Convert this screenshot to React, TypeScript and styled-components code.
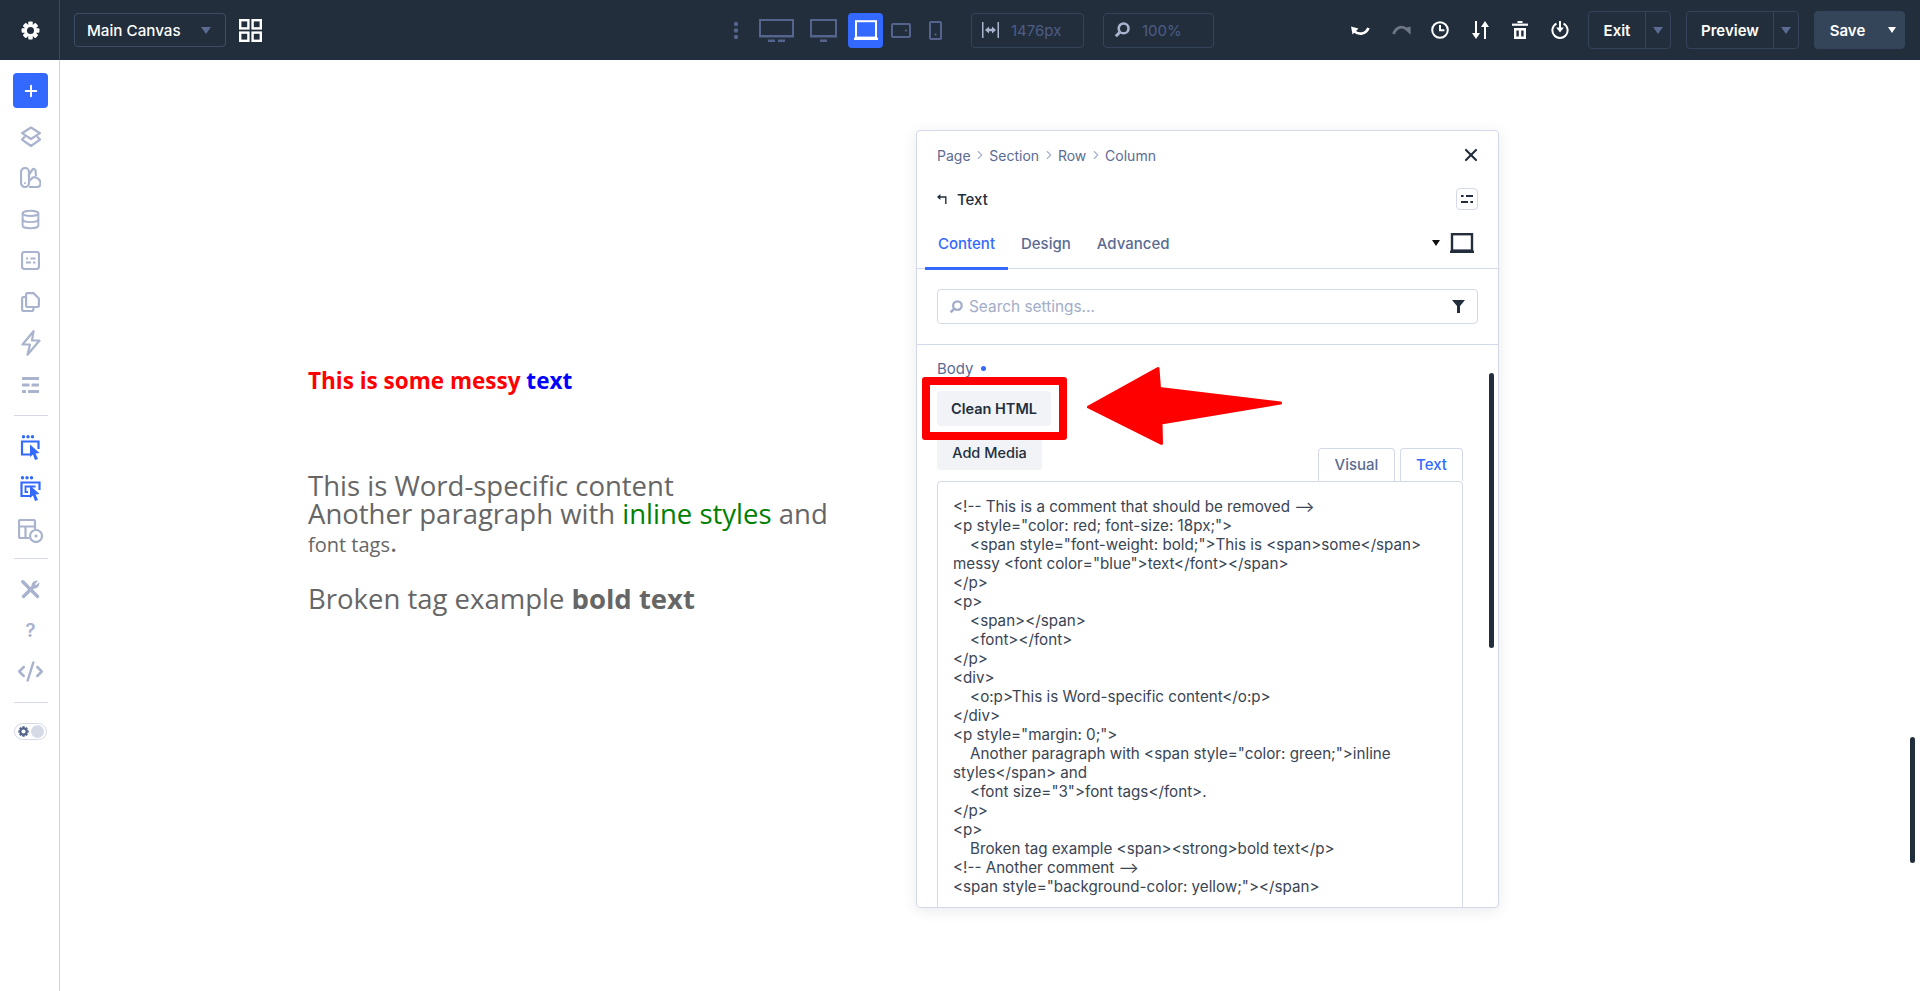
import React from "react";
import styled, { createGlobalStyle } from "styled-components";
import { Database, Plus, X, ChevronRight, Code2 } from "lucide-react";

const GlobalStyle = createGlobalStyle`
  html, body {
    margin: 0;
    padding: 0;
    height: 100%;
    overflow: hidden;
    background: #ffffff;
    font-family: Inter, "Liberation Sans", sans-serif;
  }
  * {
    box-sizing: border-box;
  }
`;

const Shell = styled.div`
  width: 100%;
  height: 100vh;
  display: flex;
  flex-direction: column;
  overflow: hidden;
`;

/* ---------- top bar ---------- */
const TopBar = styled.header`
  height: 60px;
  flex: none;
  display: flex;
  align-items: center;
  background-color: #232e3c;
`;
const GearCell = styled.div`
  width: 60px;
  height: 100%;
  flex: none;
  padding-left: 2px;
  display: flex;
  align-items: center;
  justify-content: center;
  border-right: 1px solid #3a4a63;
`;
const CanvasSelect = styled.div`
  width: 152px;
  height: 34px;
  margin-left: 14px;
  padding: 0 14px 0 12px;
  display: flex;
  align-items: center;
  justify-content: space-between;
  border: 1px solid #3d4d68;
  border-radius: 4px;
  color: #ffffff;
  font-size: 15.2px;
  font-weight: 500;
`;
const Caret = styled.span<{ $color?: string; $small?: boolean }>`
  width: 0;
  height: 0;
  flex: none;
  border-left: ${(p) => (p.$small ? 4 : 5)}px solid transparent;
  border-right: ${(p) => (p.$small ? 4 : 5)}px solid transparent;
  border-top: ${(p) => (p.$small ? 6 : 7)}px solid ${(p) => p.$color || "#5a6a90"};
`;
const GridButton = styled.div`
  margin-left: 13px;
  display: flex;
`;
const DeviceGroup = styled.div`
  margin-left: 471px;
  display: flex;
  align-items: center;
`;
const DeviceSlot = styled.div<{ $w: number; $gap: number; $active?: boolean }>`
  width: ${(p) => p.$w}px;
  height: 35px;
  margin-right: ${(p) => p.$gap}px;
  display: flex;
  align-items: center;
  justify-content: center;
  border-radius: 4px;
  background-color: ${(p) => (p.$active ? "#3369ff" : "transparent")};
`;
const MeterBox = styled.div<{ $w: number; $gap: number }>`
  width: ${(p) => p.$w}px;
  height: 35px;
  margin-left: ${(p) => p.$gap}px;
  padding-left: 10px;
  display: flex;
  align-items: center;
  gap: 12px;
  border: 1px solid #35435a;
  border-radius: 4px;
  color: #4d5d86;
  font-size: 15px;
`;
const HistoryGroup = styled.div`
  margin-left: 137px;
  display: flex;
  align-items: center;
`;
const HistoryItem = styled.span<{ $gap?: number }>`
  display: flex;
  margin-left: ${(p) => p.$gap || 0}px;
`;
const BarButton = styled.div<{ $w: number; $gap: number; $solid?: boolean }>`
  width: ${(p) => p.$w}px;
  height: 38px;
  margin-left: ${(p) => p.$gap}px;
  flex: none;
  display: flex;
  align-items: center;
  border: 1px solid ${(p) => (p.$solid ? "#34455a" : "#35435a")};
  border-radius: 4px;
  background-color: ${(p) => (p.$solid ? "#34455a" : "transparent")};
  color: #ffffff;
  font-size: 15px;
  font-weight: 600;
`;
const BarLabel = styled.span`
  flex: 1;
  text-align: center;
`;
const BarSplit = styled.span<{ $w: number; $line?: boolean }>`
  width: ${(p) => p.$w}px;
  height: 100%;
  flex: none;
  display: flex;
  align-items: center;
  justify-content: center;
  border-left: ${(p) => (p.$line ? "1px solid #35435a" : "none")};
`;

/* ---------- left rail ---------- */
const Workspace = styled.div`
  flex: 1;
  min-height: 0;
  display: flex;
`;
const SideRail = styled.aside`
  width: 60px;
  flex: none;
  padding: 13px 0 0 2px;
  display: flex;
  flex-direction: column;
  align-items: center;
  border-right: 1px solid #ccd3e2;
`;
const AddButton = styled.div`
  width: 35px;
  height: 35px;
  flex: none;
  display: flex;
  align-items: center;
  justify-content: center;
  border-radius: 4px;
  background-color: #3369ff;
  color: #ffffff;
`;
const RailGroup = styled.div<{ $top: number }>`
  margin-top: ${(p) => p.$top}px;
  width: 100%;
  display: flex;
  flex-direction: column;
`;
const RailItem = styled.div<{ $h?: number }>`
  height: ${(p) => p.$h || 41.3}px;
  display: flex;
  align-items: center;
  justify-content: center;
  color: #a9b3cd;
`;
const RailRule = styled.div<{ $top: number }>`
  width: 34px;
  height: 1px;
  flex: none;
  margin-top: ${(p) => p.$top}px;
  background-color: #d5dae6;
`;
const QuestionMark = styled.span`
  color: #a9b3cd;
  font-size: 19px;
  font-weight: 600;
`;
const ThemeToggle = styled.div`
  width: 33px;
  height: 17px;
  margin-top: 20px;
  padding: 0 2px 0 3px;
  display: flex;
  align-items: center;
  justify-content: space-between;
  border: 1px solid #d5dae6;
  border-radius: 9px;
`;
const ToggleKnob = styled.span`
  width: 13px;
  height: 13px;
  border-radius: 50%;
  background-color: #d5dae6;
`;

/* ---------- canvas ---------- */
const Canvas = styled.main`
  flex: 1;
  position: relative;
  min-width: 0;
  padding: 307px 0 0 248px;
  font-family: "Open Sans", sans-serif;
  color: #666666;
`;
const MessyLine = styled.p`
  margin: 0;
  color: #ff0000;
  font-size: 22.5px;
  font-weight: 700;
  line-height: 28px;
`;
const BlueText = styled.span`
  color: #0000ff;
`;
const BodyCopy = styled.div`
  margin-top: 77px;
  font-size: 27.5px;
  line-height: 28px;
`;
const GreenText = styled.span`
  color: #008000;
`;
const SmallText = styled.span`
  font-size: 20px;
`;
const BrokenLine = styled.p`
  margin: 20px 0 0;
  font-size: 27.5px;
  line-height: 40px;
`;
const PageScrollThumb = styled.div`
  position: absolute;
  right: 5px;
  top: 677px;
  width: 5px;
  height: 126px;
  border-radius: 3px;
  background-color: #232e3c;
`;

/* ---------- settings window ---------- */
const SettingsWindow = styled.section`
  position: absolute;
  left: 856px;
  top: 70px;
  width: 583px;
  height: 778px;
  overflow: hidden;
  background-color: #ffffff;
  border: 1px solid #d3d9e8;
  border-radius: 4px;
  box-shadow: 0 3px 14px rgba(45, 60, 90, 0.1);
  font-family: Inter, "Liberation Sans", sans-serif;
`;
const CrumbRow = styled.div`
  height: 48px;
  padding: 0 20px;
  display: flex;
  align-items: center;
  color: #5b6b93;
  font-size: 14px;
`;
const CrumbSep = styled.span`
  display: flex;
  margin: 0 2.4px;
  color: #a9b3cd;
`;
const CloseSlot = styled.span`
  margin: 0 -3px 0 auto;
  display: flex;
  color: #232e3c;
`;
const TitleRow = styled.div`
  height: 40px;
  padding: 0 20px;
  display: flex;
  align-items: center;
  gap: 10px;
  color: #232e3c;
  font-size: 15px;
  font-weight: 500;
`;
const PresetButton = styled.span`
  width: 22px;
  height: 22px;
  margin-left: auto;
  display: flex;
  align-items: center;
  justify-content: center;
  border: 1px solid #d3d9e8;
  border-radius: 4px;
`;
const TabRow = styled.div`
  height: 50px;
  padding: 0 24px 0 8px;
  display: flex;
  align-items: flex-start;
  border-bottom: 1px solid #d3d9e8;
`;
const TabItem = styled.div<{ $active?: boolean }>`
  height: 51px;
  padding: 1px 13px 0;
  display: flex;
  align-items: center;
  border-bottom: 3px solid ${(p) => (p.$active ? "#3369ff" : "transparent")};
  color: ${(p) => (p.$active ? "#3369ff" : "#5b6b93")};
  font-size: 15px;
  font-weight: 500;
`;
const ScreenPicker = styled.div`
  margin-left: auto;
  height: 48px;
  display: flex;
  align-items: center;
  gap: 10px;
`;
const SearchZone = styled.div`
  height: 76px;
  padding: 20px;
  border-bottom: 1px solid #d3d9e8;
`;
const SearchBox = styled.div`
  height: 35px;
  padding: 0 12px 0 11px;
  display: flex;
  align-items: center;
  gap: 6px;
  border: 1px solid #d3d9e8;
  border-radius: 4px;
  color: #a3adc9;
  font-size: 15.4px;
`;
const FilterSlot = styled.span`
  margin-left: auto;
  display: flex;
`;
const FieldZone = styled.div`
  position: relative;
  padding: 15px 35px 0 20px;
`;
const FieldLabel = styled.div`
  height: 17px;
  display: flex;
  align-items: center;
  gap: 7px;
  color: #5b6b93;
  font-size: 15px;
`;
const ChangedDot = styled.span`
  width: 5px;
  height: 5px;
  border-radius: 50%;
  background-color: #3369ff;
`;
const MediaButton = styled.div<{ $w: number; $top: number; $strong?: boolean }>`
  width: ${(p) => p.$w}px;
  height: 35px;
  margin-top: ${(p) => p.$top}px;
  display: flex;
  align-items: center;
  justify-content: center;
  border-radius: 4px;
  background-color: #f1f3f7;
  color: #232e3c;
  font-size: 14.5px;
  font-weight: ${(p) => (p.$strong ? 600 : 500)};
`;
const EditorTabs = styled.div`
  margin-top: -22px;
  height: 33px;
  display: flex;
  justify-content: flex-end;
  gap: 5px;
`;
const EditorTab = styled.div<{ $w: number; $active?: boolean }>`
  width: ${(p) => p.$w}px;
  height: 33px;
  padding-bottom: 2px;
  display: flex;
  align-items: center;
  justify-content: center;
  border: 1px solid #d3d9e8;
  border-bottom: none;
  border-radius: 4px 4px 0 0;
  color: ${(p) => (p.$active ? "#3369ff" : "#5b6b93")};
  font-size: 15px;
  font-weight: 500;
`;
const CodeArea = styled.div`
  height: 460px;
  padding: 15px 15px 0 15px;
  border: 1px solid #d3d9e8;
  border-radius: 4px 4px 0 0;
  color: #3a4554;
  font-size: 15.2px;
  line-height: 19px;
  white-space: pre-wrap;
`;
const PanelScrollThumb = styled.div`
  position: absolute;
  right: 4px;
  top: 28px;
  width: 5px;
  height: 275px;
  border-radius: 3px;
  background-color: #232e3c;
`;
const Highlight = styled.div`
  position: absolute;
  left: 5px;
  top: 32px;
  width: 145px;
  height: 63px;
  border: 8px solid #ff0000;
  border-radius: 3px;
`;

const CODE_TEXT = `<!-- This is a comment that should be removed -->
<p style="color: red; font-size: 18px;">
    <span style="font-weight: bold;">This is <span>some</span> messy <font color="blue">text</font></span>
</p>
<p>
    <span></span>
    <font></font>
</p>
<div>
    <o:p>This is Word-specific content</o:p>
</div>
<p style="margin: 0;">
    Another paragraph with <span style="color: green;">inline styles</span> and
    <font size="3">font tags</font>.
</p>
<p>
    Broken tag example <span><strong>bold text</p>
<!-- Another comment -->
<span style="background-color: yellow;"></span>`;

const GearIcon = ({ size, color, hole }: { size: number; color: string; hole: string }) => (
  <svg width={size} height={size} viewBox="0 0 20 20">
    <g fill={color}>
      {[0, 45, 90, 135].map((a) => (
        <rect key={a} x="7.6" y="0.6" width="4.8" height="18.8" rx="1" transform={`rotate(${a} 10 10)`} />
      ))}
    </g>
    <circle cx="10" cy="10" r="6.4" fill={color} />
    <circle cx="10" cy="10" r="3.7" fill={hole} />
  </svg>
);

const GridIcon = () => (
  <svg width="23" height="23" viewBox="0 0 23 23" fill="none" stroke="#ffffff" strokeWidth="2.4">
    <rect x="1.2" y="1.2" width="8.2" height="8.2" />
    <rect x="13.6" y="1.2" width="8.2" height="8.2" />
    <rect x="1.2" y="13.6" width="8.2" height="8.2" />
    <rect x="13.6" y="13.6" width="8.2" height="8.2" />
  </svg>
);

const DEVICE = "#55648c";

const KebabIcon = () => (
  <svg width="6" height="19" viewBox="0 0 6 19" fill={DEVICE}>
    <circle cx="3" cy="3" r="2.2" />
    <circle cx="3" cy="9.5" r="2.2" />
    <circle cx="3" cy="16" r="2.2" />
  </svg>
);
const WideMonitorIcon = () => (
  <svg width="35" height="23" viewBox="0 0 35 23" fill="none">
    <rect x="1" y="1" width="33" height="16" stroke={DEVICE} strokeWidth="2" />
    <rect x="0" y="16" width="35" height="2.5" fill={DEVICE} />
    <rect x="9" y="20.5" width="7" height="2.5" fill={DEVICE} />
    <rect x="19" y="20.5" width="7" height="2.5" fill={DEVICE} />
  </svg>
);
const MonitorIcon = () => (
  <svg width="27" height="23" viewBox="0 0 27 23" fill="none">
    <rect x="1" y="1" width="25" height="16" stroke={DEVICE} strokeWidth="2" />
    <rect x="0" y="16" width="27" height="2.5" fill={DEVICE} />
    <rect x="10" y="20.5" width="7" height="2.5" fill={DEVICE} />
  </svg>
);
const LaptopIcon = ({ color, stroke }: { color: string; stroke: number }) => (
  <svg width="24" height="20" viewBox="0 0 24 20" fill="none">
    <rect x="2" y="1.2" width="20" height="16.4" stroke={color} strokeWidth={stroke} />
    <rect x="0" y="17.6" width="24" height="2.4" fill={color} />
  </svg>
);
const TabletIcon = () => (
  <svg width="20" height="15" viewBox="0 0 20 15" fill="none">
    <rect x="1" y="1" width="18" height="13" rx="1" stroke={DEVICE} strokeWidth="2" />
    <circle cx="15" cy="7.5" r="1.1" fill={DEVICE} />
  </svg>
);
const PhoneIcon = () => (
  <svg width="13" height="19" viewBox="0 0 13 19" fill="none">
    <rect x="1" y="1" width="11" height="17" rx="1" stroke={DEVICE} strokeWidth="2" />
    <circle cx="6.5" cy="13.5" r="1.1" fill={DEVICE} />
  </svg>
);
const ResizeIcon = () => (
  <svg width="17" height="16" viewBox="0 0 17 16" fill="#a9b3cd">
    <rect x="0" y="0" width="1.5" height="16" />
    <rect x="15.5" y="0" width="1.5" height="16" />
    <path d="M3 8l4-3.5v2.3h3V4.5L14 8l-4 3.5V9.2H7v2.3z" />
  </svg>
);
const LensIcon = ({ size, color }: { size: number; color: string }) => (
  <svg width={size} height={size} viewBox="0 0 16 16" fill="none" stroke={color}>
    <circle cx="9.6" cy="6.4" r="4.9" strokeWidth="2.6" />
    <path d="M5.8 10.2L1.8 14.2" strokeWidth="3" />
  </svg>
);

const UndoIcon = () => (
  <svg width="19" height="11" viewBox="0 0 19 11" fill="none">
    <path d="M0 1.5L7.5 3.5L1.5 9.5Z" fill="#ffffff" />
    <path d="M3.5 6.5C8 10 14.5 9.5 17.5 3" stroke="#ffffff" strokeWidth="2.8" />
  </svg>
);
const RedoIcon = () => (
  <svg width="19" height="11" viewBox="0 0 19 11" fill="none">
    <path d="M11.5 3.2L18.6 1.6L18.6 9.8Z" fill="#6d7683" />
    <path d="M15 4.5C10.5 0.5 4.5 1.5 1.5 9" stroke="#6d7683" strokeWidth="2.8" />
  </svg>
);
const ClockIcon = () => (
  <svg width="18" height="18" viewBox="0 0 18 18" fill="none" stroke="#ffffff" strokeWidth="2">
    <circle cx="9" cy="9" r="7.8" />
    <path d="M9 4v5.2h4.4" />
  </svg>
);
const SortIcon = () => (
  <svg width="17" height="18" viewBox="0 0 17 18" fill="#ffffff">
    <rect x="3" y="0" width="2" height="13" />
    <path d="M0 12h8l-4 6z" />
    <rect x="12" y="5" width="2" height="13" />
    <path d="M9 6h8l-4-6z" />
  </svg>
);
const TrashIcon = () => (
  <svg width="16" height="18" viewBox="0 0 16 18" fill="none">
    <rect x="5.5" y="0" width="5" height="2" fill="#ffffff" />
    <rect x="0" y="2.6" width="16" height="2.2" fill="#ffffff" />
    <path d="M2 7h12v11H2z M4.4 9.4v6.2h2.4V9.4z M9.2 9.4v6.2h2.4V9.4z" fill="#ffffff" fillRule="evenodd" />
  </svg>
);
const PowerIcon = () => (
  <svg width="18" height="18" viewBox="0 0 18 18" fill="none" stroke="#ffffff" strokeWidth="2">
    <path d="M5.5 2.6A7.6 7.6 0 1 0 12.5 2.6" />
    <path d="M9 0v7" strokeWidth="2" />
    <path d="M5.2 6.6h7.6L9 11.6z" fill="#ffffff" stroke="none" />
  </svg>
);

const LayersIcon = () => (
  <svg width="22" height="22" viewBox="0 0 22 22" fill="none" stroke="currentColor" strokeWidth="2.2" strokeLinejoin="round">
    <path d="M11 1.5L20 7.2L11 13L2 7.2Z" />
    <path d="M5 10.5L2 13.6L11 20L20 13.6L17 10.5" />
  </svg>
);
const PaletteIcon = () => (
  <svg width="21" height="21" viewBox="0 0 21 21" fill="none" stroke="currentColor" strokeWidth="2.2">
    <rect x="1" y="1" width="8" height="19" rx="4" />
    <path d="M9 7.5L12.5 2.5C13.5 1.5 15 1.8 15.5 3.2L16 9" />
    <path d="M9 20h8c4 0 4.5-5 2-7.5c-2-2-4-3-6-2L9 14" />
    <circle cx="5" cy="16" r="1" fill="currentColor" stroke="none" />
  </svg>
);
const FormIcon = () => (
  <svg width="19" height="19" viewBox="0 0 19 19" fill="none" stroke="currentColor" strokeWidth="2.2">
    <rect x="1" y="1" width="17" height="17" rx="2.5" />
    <path d="M5 7.5h2M9.5 7.5h5M5 11.5h5M12 11.5h2.5" />
  </svg>
);
const PagesIcon = () => (
  <svg width="19" height="20" viewBox="0 0 19 20" fill="none" stroke="currentColor" strokeWidth="2.2" strokeLinejoin="round">
    <path d="M5.5 5H2.5A1.4 1.4 0 0 0 1.1 6.4V17.6A1.4 1.4 0 0 0 2.5 19H11A1.4 1.4 0 0 0 12.4 17.6V15" />
    <path d="M6.5 1.1H12.5L17.9 6.5V13.6A1.4 1.4 0 0 1 16.5 15H6.5A1.4 1.4 0 0 1 5.1 13.6V2.5A1.4 1.4 0 0 1 6.5 1.1Z" />
  </svg>
);
const BoltIcon = () => (
  <svg width="20" height="26" viewBox="0 0 20 26" fill="none" stroke="currentColor" strokeWidth="2.2" strokeLinejoin="round">
    <path d="M12.5 1.2L1.5 14.5H9L6.5 24.8L18.5 10.5H11Z" />
  </svg>
);
const RowsIcon = () => (
  <svg width="17" height="16" viewBox="0 0 17 16" fill="currentColor">
    <rect x="0" y="0" width="17" height="3" rx="0.5" />
    <rect x="0" y="6.5" width="7.5" height="3" rx="0.5" />
    <rect x="9.5" y="6.5" width="7.5" height="3" rx="0.5" />
    <rect x="0" y="13" width="4" height="3" rx="0.5" />
    <rect x="6" y="13" width="11" height="3" rx="0.5" />
  </svg>
);
const PickerIcon = ({ double }: { double?: boolean }) => (
  <svg width="21" height="25" viewBox="0 0 21 25" fill="none">
    <g fill="#3369ff">
      <circle cx={double ? 2.5 : 3.5} cy="1.8" r="1.7" />
      <circle cx={double ? 7 : 8} cy="1.8" r="1.7" />
      <circle cx={double ? 11.5 : 12.5} cy="1.8" r="1.7" />
    </g>
    <path d={double ? "M19.5 14V6.5H1.5V20H10" : "M18.5 14V6.5H2V19.5H10"} stroke="#3369ff" strokeWidth="2.2" />
    {double && <path d="M15.5 10.5H5.5V16H8" stroke="#3369ff" strokeWidth="1.8" />}
    <path d="M10 9.5L19.5 18L15.5 18.4L18 24L15 25L13 19.5L10 22Z" fill="#3369ff" />
  </svg>
);
const TemplateEyeIcon = () => (
  <svg width="25" height="24" viewBox="0 0 25 24" fill="none" stroke="currentColor" strokeWidth="2.2">
    <path d="M11 19H2.5A1.5 1.5 0 0 1 1 17.5V2.5A1.5 1.5 0 0 1 2.5 1H15.5A1.5 1.5 0 0 1 17 2.5V10" />
    <path d="M1 7.5H17M7.5 7.5V19" />
    <circle cx="18" cy="17" r="6" fill="#ffffff" />
    <circle cx="18" cy="17" r="1.6" fill="currentColor" stroke="none" />
  </svg>
);
const ToolsIcon = () => (
  <svg width="19" height="19" viewBox="0 0 19 19" fill="none" stroke="currentColor">
    <path d="M1.8 1.8L16.5 16.5" strokeWidth="3.4" strokeLinecap="round" />
    <path d="M2.5 16.5L12 7" strokeWidth="3.4" strokeLinecap="round" />
    <path d="M10.5 6C10.5 2.5 13.5 0 17 1L14 4L15 5.2L18.2 2.2C19 6 16 9 12.5 8.4Z" fill="currentColor" stroke="none" />
  </svg>
);
const BackIcon = () => (
  <svg width="10" height="10" viewBox="0 0 10 10" fill="none">
    <path d="M0 3L3.4 0V6Z" fill="#232e3c" />
    <path d="M3 3H8.8V10" stroke="#232e3c" strokeWidth="1.4" />
  </svg>
);
const PresetIcon = () => (
  <svg width="12" height="9" viewBox="0 0 12 9" fill="#232e3c">
    <rect x="0" y="0" width="2.6" height="2" />
    <rect x="5" y="0" width="7" height="2" />
    <rect x="0" y="6" width="7" height="2" />
    <rect x="9.4" y="6" width="2.6" height="2" />
  </svg>
);
const FilterIcon = () => (
  <svg width="13" height="13" viewBox="0 0 13 13" fill="#232e3c">
    <path d="M0 0H13L8 6V13H5V6Z" />
  </svg>
);

const ArrowSvg = ({ className }: { className?: string }) => (
  <svg
    className={className}
    width="210"
    height="90"
    viewBox="0 0 210 90"
    fill="#ff0000"
    stroke="#ff0000"
    strokeWidth="3"
    strokeLinejoin="round"
  >
    <path d="M10.5 44L80 5.5L81.5 25.5L202.5 40L83 60L83.5 80.5Z" />
  </svg>
);
const Callout = styled(ArrowSvg)`
  position: absolute;
  left: 161px;
  top: 18px;
`;

const App = () => {
  return (
    <Shell>
      <GlobalStyle />
      <TopBar>
        <GearCell>
          <GearIcon size={19} color="#ffffff" hole="#232e3c" />
        </GearCell>
        <CanvasSelect>
          Main Canvas
          <Caret />
        </CanvasSelect>
        <GridButton>
          <GridIcon />
        </GridButton>
        <DeviceGroup>
          <DeviceSlot $w={6} $gap={20}><KebabIcon /></DeviceSlot>
          <DeviceSlot $w={35} $gap={16}><WideMonitorIcon /></DeviceSlot>
          <DeviceSlot $w={27} $gap={11}><MonitorIcon /></DeviceSlot>
          <DeviceSlot $w={35} $gap={8} $active><LaptopIcon color="#ffffff" stroke={2} /></DeviceSlot>
          <DeviceSlot $w={20} $gap={18}><TabletIcon /></DeviceSlot>
          <DeviceSlot $w={13} $gap={0}><PhoneIcon /></DeviceSlot>
        </DeviceGroup>
        <MeterBox $w={113} $gap={29}>
          <ResizeIcon />
          1476px
        </MeterBox>
        <MeterBox $w={111} $gap={19}>
          <LensIcon size={16} color="#a9b3cd" />
          100%
        </MeterBox>
        <HistoryGroup>
          <HistoryItem><UndoIcon /></HistoryItem>
          <HistoryItem $gap={22}><RedoIcon /></HistoryItem>
          <HistoryItem $gap={20}><ClockIcon /></HistoryItem>
          <HistoryItem $gap={23}><SortIcon /></HistoryItem>
          <HistoryItem $gap={23}><TrashIcon /></HistoryItem>
          <HistoryItem $gap={23}><PowerIcon /></HistoryItem>
        </HistoryGroup>
        <BarButton $w={83} $gap={19}>
          <BarLabel>Exit</BarLabel>
          <BarSplit $w={25} $line><Caret /></BarSplit>
        </BarButton>
        <BarButton $w={113} $gap={15}>
          <BarLabel>Preview</BarLabel>
          <BarSplit $w={25} $line><Caret /></BarSplit>
        </BarButton>
        <BarButton $w={91} $gap={15} $solid>
          <BarLabel>Save</BarLabel>
          <BarSplit $w={24}><Caret $color="#ffffff" $small /></BarSplit>
        </BarButton>
      </TopBar>
      <Workspace>
        <SideRail>
          <AddButton><Plus size={18} strokeWidth={2.6} /></AddButton>
          <RailGroup $top={8}>
            <RailItem><LayersIcon /></RailItem>
            <RailItem><PaletteIcon /></RailItem>
            <RailItem><Database size={21} strokeWidth={2.2} /></RailItem>
            <RailItem><FormIcon /></RailItem>
            <RailItem><PagesIcon /></RailItem>
            <RailItem><BoltIcon /></RailItem>
            <RailItem $h={43}><RowsIcon /></RailItem>
          </RailGroup>
          <RailRule $top={8} />
          <RailGroup $top={11}>
            <RailItem><PickerIcon /></RailItem>
            <RailItem><PickerIcon double /></RailItem>
            <RailItem $h={43}><TemplateEyeIcon /></RailItem>
          </RailGroup>
          <RailRule $top={6} />
          <RailGroup $top={9}>
            <RailItem><ToolsIcon /></RailItem>
            <RailItem><QuestionMark>?</QuestionMark></RailItem>
            <RailItem $h={42}><Code2 size={27} strokeWidth={2.2} /></RailItem>
          </RailGroup>
          <RailRule $top={9} />
          <ThemeToggle>
            <GearIcon size={11} color="#55648c" hole="#ffffff" />
            <ToggleKnob />
          </ThemeToggle>
        </SideRail>
        <Canvas>
          <MessyLine>
            This is some messy <BlueText>text</BlueText>
          </MessyLine>
          <BodyCopy>
            This is Word-specific content
            <br />
            Another paragraph with <GreenText>inline styles</GreenText> and
            <br />
            <SmallText>font tags</SmallText>.
          </BodyCopy>
          <BrokenLine>
            Broken tag example <strong>bold text</strong>
          </BrokenLine>
          <PageScrollThumb />
          <SettingsWindow>
            <CrumbRow>
              Page
              <CrumbSep><ChevronRight size={14} /></CrumbSep>
              Section
              <CrumbSep><ChevronRight size={14} /></CrumbSep>
              Row
              <CrumbSep><ChevronRight size={14} /></CrumbSep>
              Column
              <CloseSlot><X size={20} strokeWidth={2.6} /></CloseSlot>
            </CrumbRow>
            <TitleRow>
              <BackIcon />
              Text
              <PresetButton><PresetIcon /></PresetButton>
            </TitleRow>
            <TabRow>
              <TabItem $active>Content</TabItem>
              <TabItem>Design</TabItem>
              <TabItem>Advanced</TabItem>
              <ScreenPicker>
                <Caret $color="#111111" $small />
                <LaptopIcon color="#232e3c" stroke={2.4} />
              </ScreenPicker>
            </TabRow>
            <SearchZone>
              <SearchBox>
                <LensIcon size={14} color="#a3adc9" />
                Search settings...
                <FilterSlot><FilterIcon /></FilterSlot>
              </SearchBox>
            </SearchZone>
            <FieldZone>
              <FieldLabel>
                Body
                <ChangedDot />
              </FieldLabel>
              <MediaButton $w={114} $top={14} $strong>Clean HTML</MediaButton>
              <MediaButton $w={105} $top={9}>Add Media</MediaButton>
              <EditorTabs>
                <EditorTab $w={77}>Visual</EditorTab>
                <EditorTab $w={63} $active>Text</EditorTab>
              </EditorTabs>
              <CodeArea>{CODE_TEXT}</CodeArea>
              <PanelScrollThumb />
              <Highlight />
              <Callout />
            </FieldZone>
          </SettingsWindow>
        </Canvas>
      </Workspace>
    </Shell>
  );
};

export default App;
